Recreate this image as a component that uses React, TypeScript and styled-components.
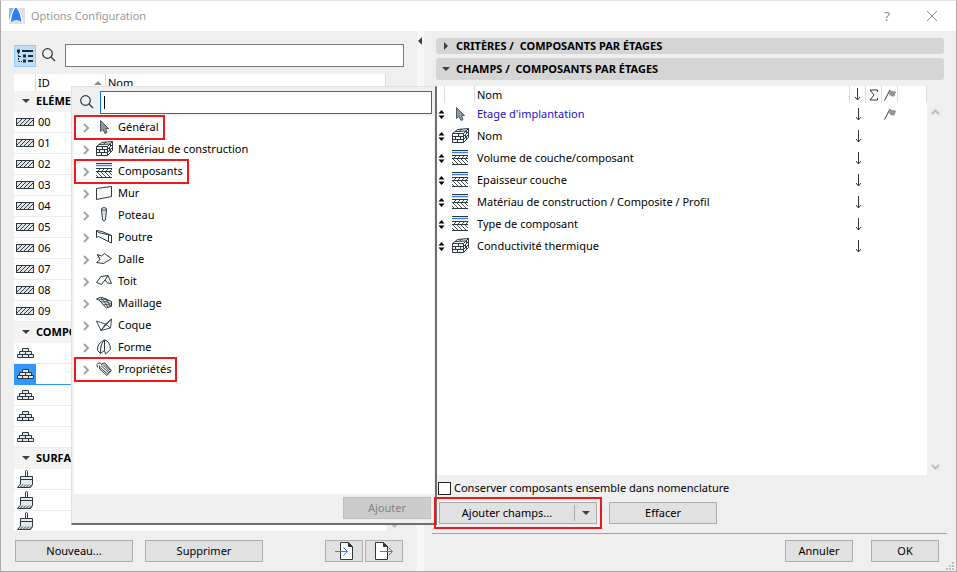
import React from "react";
import styled, { createGlobalStyle, css } from "styled-components";

const INK = "#2b3840";
const BLUE = "#2f7fee";

const GlobalStyle = createGlobalStyle`
  *, *::before, *::after { box-sizing: border-box; }
  body { margin: 0; background: #efefef; }
  body, button, input {
    font-family: "Noto Sans", "Open Sans", sans-serif;
    font-size: 11px;
    line-height: 16px;
    color: #000;
  }
  svg { display: block; flex: none; }
`;

/* ---------- layout ---------- */

const Dialog = styled.main`
  display: flex;
  flex-direction: column;
  min-height: 100vh;
  background: #efefef;
  border: 1px solid #a9a9a9;
  border-top-color: #e4e4e4;
`;

const TitleBar = styled.header`
  display: flex;
  align-items: center;
  height: 30px;
  padding: 0 17px 0 8px;
  background: #fff;
`;

const Title = styled.h1`
  flex: 1;
  margin: 0 0 0 6px;
  font-size: 11px;
  font-weight: 400;
  color: #999;
`;

const TitleButton = styled.button`
  display: flex;
  align-items: center;
  justify-content: center;
  width: 14px;
  height: 20px;
  margin-left: 31px;
  padding: 0;
  border: 0;
  background: none;
  font-size: 13px;
  color: #8a8a8a;
`;

const Body = styled.div`
  display: grid;
  flex: 1;
  grid-template-columns: 416px 7px minmax(0, 1fr);
`;

const SidePanel = styled.section`
  position: relative;
  display: flex;
  flex-direction: column;
  padding: 13px 13px 8px 13px;
`;

const Splitter = styled.div`
  padding: 6px 0 0;
  background: #f7f7f7;
`;

const MainPanel = styled.section`
  display: flex;
  flex-direction: column;
  min-width: 0;
  padding: 7px 9px 8px 8px;
`;

const Toolbar = styled.div`
  display: flex;
  align-items: center;
  height: 23px;
  margin-bottom: 7px;
`;

const ToggleButton = styled.button`
  display: flex;
  align-items: center;
  justify-content: center;
  width: 22px;
  height: 22px;
  padding: 0;
  border: 1px solid #90c8f6;
  background: #bfdef5;
`;

const SearchLabel = styled.label`
  display: flex;
  flex: none;
  padding: 0 9px 2px 6px;
`;

const SearchInput = styled.input<{ $active?: boolean }>`
  flex: 1;
  min-width: 0;
  height: 23px;
  padding: 0 3px;
  border: 1px solid ${(p) => (p.$active ? "#0078d7" : "#7a7a7a")};
  border-radius: 0;
  outline: 0;
  background: #fff;
`;

const CaretField = styled.div`
  position: relative;
  display: flex;
  flex: 1;
  margin-left: -3px;
  &::after {
    content: "";
    position: absolute;
    left: 4px;
    top: 5px;
    width: 1px;
    height: 13px;
    background: #000;
  }
`;

/* ---------- side list ---------- */

const ListFrame = styled.div`
  display: flex;
  flex: 1;
`;

const SideTable = styled.table`
  flex: none;
  align-self: flex-start;
  table-layout: fixed;
  width: 372px;
  border-spacing: 0;
  background: #fff;
  td, th { padding: 0; text-align: left; }
`;

const SideHead = styled.th`
  height: 17px;
  font-weight: 400;
  line-height: 16px;
  border-right: 1px solid #dcdcdc;
`;

const HeadLabel = styled.span`
  display: flex;
  align-items: center;
  justify-content: space-between;
  padding: 0 3px 0 2px;
`;

const GroupCell = styled.th`
  height: 21px;
  background: #f3f3f3;
`;

const GroupLabel = styled.span`
  display: flex;
  align-items: center;
  gap: 6px;
  padding: 0 0 2px 8px;
  font-weight: 700;
`;

const SideCell = styled.td<{ $selected?: boolean; $mark?: boolean }>`
  height: 21px;
  line-height: 20px;
  border-bottom: 1px solid ${(p) => (p.$selected ? "#3296fa" : "#ececec")};
  ${(p) => p.$selected && p.$mark && css`background: #3296fa;`}
  > svg { margin-left: 2px; }
`;

const SideId = styled.span`
  padding-left: 2px;
`;

const ScrollTrack = styled.div`
  display: flex;
  flex: none;
  flex-direction: column;
  justify-content: space-between;
  align-items: center;
  width: 17px;
  padding: 23px 1px 5px 0;
`;

/* ---------- buttons ---------- */

const ButtonRow = styled.div<{ $end?: boolean }>`
  display: flex;
  gap: ${(p) => (p.$end ? "18px" : "12px")};
  justify-content: ${(p) => (p.$end ? "flex-end" : "flex-start")};
  padding: ${(p) => (p.$end ? "6px 8px 1px 0" : "7px 0 1px 1px")};
`;

const PushButton = styled.button<{ $width: number }>`
  display: flex;
  align-items: center;
  justify-content: center;
  width: ${(p) => p.$width}px;
  height: 22px;
  padding: 0;
  border: 1px solid #adadad;
  background: #e1e1e1;
  &:disabled {
    border-color: #bfbfbf;
    background: #cccccc;
    color: #838383;
  }
`;

const IconPair = styled.div`
  display: flex;
  gap: 2px;
  margin-left: auto;
  padding-right: 1px;
`;

const Highlight = styled.div<{ $gap: number }>`
  position: relative;
  width: fit-content;
  &::after {
    content: "";
    position: absolute;
    z-index: 3;
    inset: ${(p) => -p.$gap}px;
    border: 2px solid #f01818;
    pointer-events: none;
  }
`;

const SplitButton = styled.div`
  display: flex;
  align-items: center;
  width: 158px;
  height: 22px;
  border: 1px solid #adadad;
  background: #e1e1e1;
`;

const SplitPart = styled.button<{ $menu?: boolean }>`
  display: flex;
  flex: ${(p) => (p.$menu ? "0 0 22px" : "1")};
  align-items: center;
  justify-content: center;
  height: 16px;
  padding: 0;
  border: 0;
  border-left: ${(p) => (p.$menu ? "1px solid #a8a8a8" : "0")};
  background: none;
`;

/* ---------- popup ---------- */

const Popup = styled.div`
  position: absolute;
  z-index: 2;
  top: 55px;
  bottom: 46px;
  left: 70px;
  right: -20px;
  display: flex;
  flex-direction: column;
  padding-left: 2px;
  background: #f0f0f0;
  border: 1px solid #e0e0e0;
  border-right: 2px solid #6e6e6e;
  border-bottom: 2px solid #6e6e6e;
`;

const PopupSearch = styled.div`
  display: flex;
  align-items: center;
  height: 29px;
  padding: 2px 3px 0 0;
`;

const Tree = styled.ul`
  flex: 1;
  margin: 0 1px 0 0;
  padding: 0;
  list-style: none;
  background: #fff;
`;

const TreeRow = styled.div<{ $marked?: boolean }>`
  position: relative;
  display: flex;
  align-items: center;
  gap: 6px;
  width: fit-content;
  height: 22px;
  padding: 0 6px 0 9px;
  ${(p) => p.$marked && css`
    &::after {
      content: "";
      position: absolute;
      inset: -1px 0 -2px 0;
      border: 2px solid #f01818;
    }
  `}
`;

const TreeIcon = styled.span`
  display: flex;
  flex: none;
  width: 16px;
`;

const TreeName = styled.span`
  padding-bottom: 1px;
`;

const TreeToggle = styled.button`
  display: flex;
  padding: 2px 0 0;
  border: 0;
  background: none;
`;

const PopupFooter = styled.div`
  display: flex;
  justify-content: flex-end;
  height: 29px;
  padding: 3px 4px 0 0;
`;

/* ---------- main panel ---------- */

const SectionBar = styled.button<{ $open?: boolean }>`
  display: flex;
  flex: none;
  align-items: center;
  gap: 6px;
  height: ${(p) => (p.$open ? "22px" : "16px")};
  margin: 0 3px ${(p) => (p.$open ? "6px" : "4px")} 4px;
  padding: 0 6px;
  border: 0;
  border-radius: 3px;
  background: #d5d5d5;
  font-weight: 700;
  text-align: left;
  white-space: pre;
`;

const FieldFrame = styled.div`
  display: flex;
  flex: 1;
  margin: 0 3px 0 4px;
`;

const FieldArea = styled.div`
  flex: 1;
  min-width: 0;
  background: #fff;
`;

const FieldTable = styled.table`
  table-layout: fixed;
  width: 100%;
  border-spacing: 0;
  th, td { padding: 0; text-align: left; font-weight: 400; }
  th { height: 17px; border-right: 1px solid #dcdcdc; }
  td { height: 22px; }
  svg { margin: 0 auto; }
`;

const SortCell = styled.td`
  && { padding-left: 2px; }
`;

const FieldName = styled.td<{ $link?: boolean }>`
  && { padding: 0 0 1px 2px; }
  color: ${(p) => (p.$link ? "#1a10d0" : "#000")};
`;

const FieldHead = styled.th`
  && { padding-left: 2px; }
`;

const CheckLine = styled.label`
  display: flex;
  align-items: center;
  gap: 3px;
  height: 16px;
  margin: 5px 0 6px 6px;
`;

const CheckBox = styled.input`
  appearance: none;
  width: 13px;
  height: 13px;
  margin: 0;
  border: 1px solid #222;
  background: #fff;
  &:checked { background: #3296fa; }
`;

const FieldActions = styled.div`
  display: flex;
  gap: 12px;
  padding: 0 0 9px 7px;
  border-bottom: 1px solid #a0a0a0;
`;

const Grip = styled.div`
  display: flex;
  justify-content: flex-end;
  height: 0;
  align-items: flex-end;
  > svg { margin: 0 -7px -7px 0; }
`;

/* ---------- icons ---------- */

type IconProps = { w?: number; h?: number; children: React.ReactNode; color?: string; label?: string };

const Icon = ({ w = 16, h = 16, children, color = INK, label }: IconProps) => (
  <svg
    width={w}
    height={h}
    viewBox={`0 0 ${w} ${h}`}
    fill="none"
    stroke={color}
    role={label ? "img" : undefined}
    aria-label={label}
    aria-hidden={label ? undefined : true}
  >
    {children}
  </svg>
);

const Logo = () => (
  <Icon w={16} h={16}>
    <rect width="16" height="16" fill="#dde1e6" stroke="none" />
    <path d="M0 0H5Q2 5 0 13Z" fill="#8dbaf7" stroke="none" />
    <path d="M2 14Q3 4 6 0H8Q11 4 12.500 14Q8 10 2 14Z" fill="#2b7ff2" stroke="none" />
    <path d="M8 0Q12 4 13.500 15" stroke="#fff" />
    <path d="M.5 15Q2 5 5.500 0" stroke="#fff" />
  </Icon>
);

const CloseIcon = () => (
  <Icon w={12} h={12} color="#8a8a8a"><path d="M1 1L11 11M11 1L1 11" /></Icon>
);

const SearchIcon = () => (
  <Icon w={14} h={14}>
    <circle cx="5.500" cy="5.500" r="4.800" strokeWidth="1.200" />
    <path d="M9 9L13 13" strokeWidth="1.300" />
  </Icon>
);

const HierarchyIcon = () => (
  <Icon w={17} h={14} color="#1d2a35">
    <path d="M5 2H16M11 7H16M11 12H16" strokeWidth="2" />
    <path d="M0 2H3M6 7H9M6 12H9" strokeWidth="3" />
    <path d="M1.500 3V12.500H5M2 7.500H5" strokeDasharray="2 1" />
  </Icon>
);

const HatchIcon = () => (
  <Icon w={18} h={8}>
    <rect x=".5" y=".5" width="17" height="7" fill="#e4e6e7" />
    <path d="M1 6L6 1M4 7L10 1M8 7L14 1M12 7L17 2" />
  </Icon>
);

const PyramidIcon = () => (
  <Icon w={19} h={12}>
    <path
      d="M6.500 1.500H12.500V4.500H6.500ZM3.500 4.500H15.500V7.500H3.500ZM1.500 7.500H17.500V10.500H1.500ZM9.500 4.500V7.500M6.500 7.500V10.500M12.500 7.500V10.500"
      fill="#e3eaee"
    />
  </Icon>
);

const BrushIcon = () => (
  <Icon w={18} h={18}>
    <path d="M9.500 6.500V1.500Q9.500 .5 10.500 .5Q11.500 .5 11.500 1.500V6.500" fill="#fff" />
    <path d="M4.500 6.500H16.500V14.500L14.500 17.500H1.500L4.500 14Z" fill="#e3e8ea" />
    <path d="M4 9.500H17" />
    <path d="M7 14.500L4 17.500M10 14.500L7 17.500M13 14.500L10 17.500M16 14.500L13 17.500" />
  </Icon>
);

const Triangle = ({ dir }: { dir: "down" | "right" | "left" | "up" }) => {
  const d = { down: "M0 2H8L4 6Z", right: "M2 0L6 4L2 8Z", left: "M5 0V8L1 4Z", up: "M0 6L4 2L8 6Z" }[dir];
  return <Icon w={8} h={8}><path d={d} fill={dir === "up" ? "#8a8a8a" : "#404040"} stroke="none" /></Icon>;
};

const Chevron = () => (
  <Icon w={7} h={10} color="#a3a3a3"><path d="M1 1L5 5L1 9" strokeWidth="2" /></Icon>
);

const ScrollArrow = ({ up }: { up?: boolean }) => (
  <Icon w={9} h={6} color="#bcbcbc"><path d={up ? "M1 5L4.500 1.500L8 5" : "M1 1L4.500 4.500L8 1"} strokeWidth="2" /></Icon>
);

const CursorIcon = () => (
  <Icon><path d="M4.500 1.500V12.500L7 10.500L9 14.500L11 13.500L9.500 9.500H12.500Z" fill="#8d979d" stroke="#4d595f" /></Icon>
);

const BlockIcon = () => (
  <Icon w={17} h={16}>
    <path d="M.5 5.500L5.500 1.500L16.500 .5V9.500L11.500 14.500H.5Z" fill="#f4f5f5" />
    <path d="M.5 5.500H11.500V14.500M.5 8.500H11.500M.5 11.500H11.500M11.500 5.500L16.500 .5M11.500 8.500L16.500 3.500M11.500 11.500L16.500 6.500" />
    <path d="M6.500 5.500V8.500M3.500 8.500V11.500M8.500 8.500V11.500M5.500 11.500V14.500M3 3.500L14 3M10 1L7.500 3M14.500 3V5.500M13.500 7V9.500M14.500 9V11" />
  </Icon>
);

const LayersIcon = () => (
  <Icon>
    <path d="M0 .5H16" />
    <path d="M0 2.500H16" stroke={BLUE} strokeWidth="1.400" />
    <path d="M0 5.500H16M0 8.500H16M0 14.500H16" />
    <path
      d="M4 6L2 8M8 6L6 8M12 6L10 8M16 6L14 8M1 9L6 14M5 9L10 14M9 9L14 14M13 9L16 12M0 12L2 14"
      strokeWidth=".9"
    />
  </Icon>
);

const WallIcon = () => <Icon><path d="M.5 3.500L15.500 1.500V11.500L.5 14.500Z" fill="#fafafa" /></Icon>;

const ColumnIcon = () => (
  <Icon>
    <path d="M5.500 2L6.500 13Q8 15.500 9.500 13L10.500 2" fill="#e4e7e8" />
    <ellipse cx="8" cy="2" rx="2.500" ry="1.300" fill="#fff" />
  </Icon>
);

const BeamIcon = () => (
  <Icon><path d="M.5 1.500V8.500M.5 1.500L2.500 3.500L15.500 6.500V14L12.500 12.500V6M.5 8.500L2.500 7.500L12.500 12.500M.5 1.500L6 2.500L15.500 6.500" /></Icon>
);

const SlabIcon = () => (
  <Icon><path d="M1.500 3.500L5.500 5L8.500 2.500L15.500 7.500L7.500 12.500L.5 11.500L4 8.500ZM4 8.500L1.500 4" fill="#fafafa" /></Icon>
);

const RoofIcon = () => (
  <Icon><path d="M.5 9.500L5 3.500L12 2.500L15.500 10.500L11.500 10L9 7L5.500 11.500ZM9 7L12 2.500" fill="#fafafa" /></Icon>
);

const MeshIcon = () => (
  <Icon>
    <path d="M.5 4Q4 1 9 3.500L15.500 6.500V11L10.500 13Q7 10 5 7Q3 4.500 .5 4Z" fill="#e4e7e8" />
    <path d="M5 7Q10 5 15 9M7.500 10Q11 8 15.500 11M4.500 2.500Q8 5 12 12.500M8.500 3Q13 7 14 11M3 5Q8 3 13 5.500" strokeWidth=".8" />
  </Icon>
);

const ShellIcon = () => (
  <Icon><path d="M.5 4L9.500 7L15.500 2L14.500 11L9.500 7L5 13.500ZM5 13.500L15.500 2M5 13.500L14.500 11" strokeWidth=".9" /></Icon>
);

const MorphIcon = () => (
  <Icon><path d="M1.500 11.500Q1 4 8.500 1V11.500L4.500 14.500ZM8.500 1Q14 2 14.500 10.500L9.500 15L8.500 11.500M4.500 14.500Q4 5 8.500 1" fill="#fafafa" /></Icon>
);

const TagIcon = () => (
  <Icon>
    <path d="M6 2.500L9 2L15.500 9.500L11 14.500L3.500 8V4.500" fill="#eceeef" strokeWidth=".9" />
    <path d="M5 4.500L13 12M9 3.500L14.500 9.500M4 6.500L12 13.500M7 3.500L14 11" strokeWidth=".9" />
    <path d="M1.500 6.500Q0 2.500 3 2Q5 1.500 6 4" />
  </Icon>
);

const SortIcon = () => (
  <Icon w={7} h={9}><path d="M3.500 0L6.500 3.500H.5ZM3.500 9L.5 5.500H6.500Z" fill="#000" stroke="none" /></Icon>
);

const DownArrow = ({ label }: { label?: string }) => (
  <Icon w={7} h={13} label={label}><path d="M3.500 0V12M1 9L3.500 12L6 9" /></Icon>
);

const SigmaIcon = () => (
  <Icon w={9} h={12} label="Somme"><path d="M8.500 3V1H1L5 6L1 11H8.500V9" /></Icon>
);

const FlagIcon = ({ label }: { label?: string }) => (
  <Icon w={12} h={12} label={label}>
    <path d="M6.500 2L8.500 2.500L11.500 3L10 7L8 7L5.500 5.500Z" fill="#8c979d" stroke="#8c979d" />
    <path d="M6 1L.5 11.500" />
  </Icon>
);

const PageArrow = ({ out }: { out?: boolean }) => (
  <Icon w={20} h={18}>
    <path d={out ? "M1.500 .5H9.500L13.500 4.500V17.500H1.500Z" : "M6.500 .5H14.500L18.500 4.500V17.500H6.500Z"} fill="#fff" />
    <path d={out ? "M9.500 .5V4.500H13.500" : "M14.500 .5V4.500H18.500"} fill={INK} />
    <path d={out ? "M6 9.500H18M14.500 5.500L18.500 9.500L14.500 13.500" : "M1 9.500H13M9.500 5.500L13.500 9.500L9.500 13.500"} stroke={BLUE} />
  </Icon>
);

const GripIcon = () => (
  <Icon w={8} h={8}><path d="M6 0h2v2h-2zM3 3h2v2h-2zM6 3h2v2h-2zM0 6h2v2h-2zM3 6h2v2h-2zM6 6h2v2h-2z" fill="#bdbdbd" stroke="none" /></Icon>
);

/* ---------- data ---------- */

type SideItem = { id?: string; selected?: boolean };

const groups: { name: string; icon: React.ReactNode; items: SideItem[] }[] = [
  {
    name: "ELÉMENTS",
    icon: <HatchIcon />,
    items: ["00", "01", "02", "03", "04", "05", "06", "07", "08", "09"].map((id) => ({ id })),
  },
  { name: "COMPOSANTS", icon: <PyramidIcon />, items: [{}, { selected: true }, {}, {}, {}] },
  { name: "SURFACES", icon: <BrushIcon />, items: [{}, {}, {}] },
];

const categories = [
  { name: "Général", icon: <CursorIcon />, marked: true },
  { name: "Matériau de construction", icon: <BlockIcon /> },
  { name: "Composants", icon: <LayersIcon />, marked: true },
  { name: "Mur", icon: <WallIcon /> },
  { name: "Poteau", icon: <ColumnIcon /> },
  { name: "Poutre", icon: <BeamIcon /> },
  { name: "Dalle", icon: <SlabIcon /> },
  { name: "Toit", icon: <RoofIcon /> },
  { name: "Maillage", icon: <MeshIcon /> },
  { name: "Coque", icon: <ShellIcon /> },
  { name: "Forme", icon: <MorphIcon /> },
  { name: "Propriétés", icon: <TagIcon />, marked: true },
];

const fields = [
  { name: "Etage d'implantation", icon: <CursorIcon />, link: true },
  { name: "Nom", icon: <BlockIcon /> },
  { name: "Volume de couche/composant", icon: <LayersIcon /> },
  { name: "Epaisseur couche", icon: <LayersIcon /> },
  { name: "Matériau de construction / Composite / Profil", icon: <LayersIcon /> },
  { name: "Type de composant", icon: <LayersIcon /> },
  { name: "Conductivité thermique", icon: <BlockIcon /> },
];

/* ---------- parts ---------- */

const SchemeList = () => (
  <ListFrame>
    <SideTable>
      <colgroup><col width="22" /><col width="70" /><col /></colgroup>
      <thead>
        <tr>
          <SideHead />
          <SideHead><HeadLabel>ID<Triangle dir="up" /></HeadLabel></SideHead>
          <SideHead><HeadLabel>Nom</HeadLabel></SideHead>
        </tr>
      </thead>
      {groups.map((group) => (
        <tbody key={group.name}>
          <tr>
            <GroupCell colSpan={3}><GroupLabel><Triangle dir="down" />{group.name}</GroupLabel></GroupCell>
          </tr>
          {group.items.map((item, i) => (
            <tr key={i}>
              <SideCell $selected={item.selected} $mark>{group.icon}</SideCell>
              <SideCell $selected={item.selected}><SideId>{item.id}</SideId></SideCell>
              <SideCell $selected={item.selected} />
            </tr>
          ))}
        </tbody>
      ))}
    </SideTable>
    <ScrollTrack><ScrollArrow up /><ScrollArrow /></ScrollTrack>
  </ListFrame>
);

const FieldPicker = () => (
  <Popup>
    <PopupSearch>
      <SearchLabel htmlFor="field-search"><SearchIcon /></SearchLabel>
      <CaretField><SearchInput id="field-search" aria-label="Rechercher un champ" $active /></CaretField>
    </PopupSearch>
    <Tree>
      {categories.map((c) => (
        <li key={c.name}>
          <TreeRow $marked={c.marked}>
            <TreeToggle aria-label={c.name}><Chevron /></TreeToggle>
            <TreeIcon>{c.icon}</TreeIcon>
            <TreeName>{c.name}</TreeName>
          </TreeRow>
        </li>
      ))}
    </Tree>
    <PopupFooter><PushButton $width={88} disabled>Ajouter</PushButton></PopupFooter>
  </Popup>
);

const FieldList = () => (
  <FieldFrame>
    <FieldArea>
      <FieldTable>
        <colgroup>
          <col width="9" /><col width="30" /><col /><col width="16" /><col width="16" /><col width="16" /><col width="29" />
        </colgroup>
        <thead>
          <tr>
            <th /><th /><FieldHead>Nom</FieldHead>
            <th><DownArrow label="Tri" /></th><th><SigmaIcon /></th><th><FlagIcon label="Drapeau" /></th><th />
          </tr>
        </thead>
        <tbody>
          {fields.map((f, i) => (
            <tr key={f.name}>
              <SortCell><SortIcon /></SortCell>
              <td>{f.icon}</td>
              <FieldName $link={f.link}>{f.name}</FieldName>
              <td><DownArrow /></td>
              <td />
              <td>{i === 0 && <FlagIcon />}</td>
              <td />
            </tr>
          ))}
        </tbody>
      </FieldTable>
    </FieldArea>
    <ScrollTrack><ScrollArrow up /><ScrollArrow /></ScrollTrack>
  </FieldFrame>
);

export default function App() {
  return (
    <Dialog>
      <GlobalStyle />
      <TitleBar>
        <Logo />
        <Title>Options Configuration</Title>
        <TitleButton aria-label="Aide">?</TitleButton>
        <TitleButton aria-label="Fermer"><CloseIcon /></TitleButton>
      </TitleBar>
      <Body>
        <SidePanel>
          <Toolbar>
            <ToggleButton aria-label="Arborescence"><HierarchyIcon /></ToggleButton>
            <SearchLabel htmlFor="scheme-search"><SearchIcon /></SearchLabel>
            <SearchInput id="scheme-search" aria-label="Rechercher" />
          </Toolbar>
          <SchemeList />
          <ButtonRow>
            <PushButton $width={118}>Nouveau...</PushButton>
            <PushButton $width={118}>Supprimer</PushButton>
            <IconPair>
              <PushButton $width={38} aria-label="Importer"><PageArrow /></PushButton>
              <PushButton $width={38} aria-label="Exporter"><PageArrow out /></PushButton>
            </IconPair>
          </ButtonRow>
          <FieldPicker />
        </SidePanel>
        <Splitter><Triangle dir="left" /></Splitter>
        <MainPanel>
          <SectionBar><Triangle dir="right" />{"CRITÈRES /  COMPOSANTS PAR ÉTAGES"}</SectionBar>
          <SectionBar $open><Triangle dir="down" />{"CHAMPS /  COMPOSANTS PAR ÉTAGES"}</SectionBar>
          <FieldList />
          <CheckLine>
            <CheckBox type="checkbox" />
            Conserver composants ensemble dans nomenclature
          </CheckLine>
          <FieldActions>
            <Highlight $gap={5}>
              <SplitButton>
                <SplitPart>Ajouter champs...</SplitPart>
                <SplitPart $menu aria-label="Choisir un champ"><Triangle dir="down" /></SplitPart>
              </SplitButton>
            </Highlight>
            <PushButton $width={108}>Effacer</PushButton>
          </FieldActions>
          <ButtonRow $end>
            <PushButton $width={68}>Annuler</PushButton>
            <PushButton $width={68}>OK</PushButton>
          </ButtonRow>
          <Grip><GripIcon /></Grip>
        </MainPanel>
      </Body>
    </Dialog>
  );
}
